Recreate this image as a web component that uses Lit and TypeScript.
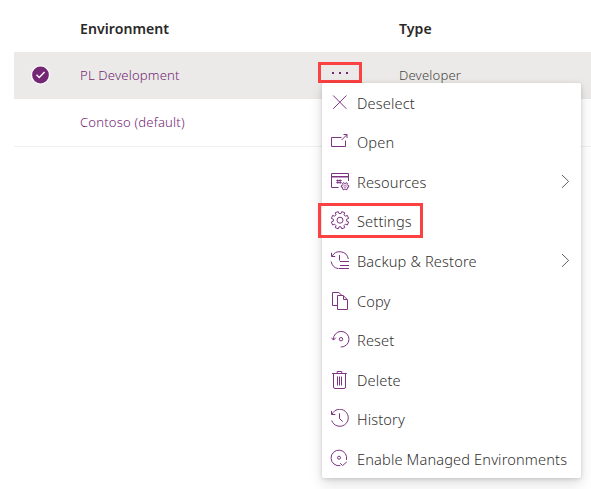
import { LitElement, html, css, svg } from "lit";
import { customElement } from "lit/decorators.js";

const gearPath = (cx: number, cy: number, ro: number, ri: number, teeth: number): string => {
  const pts: string[] = [];
  const step = (Math.PI * 2) / teeth;
  for (let i = 0; i < teeth; i++) {
    const a = i * step - Math.PI / 2 + step / 2;
    for (const [f, r] of [[-0.31, ri], [-0.24, ro], [0.24, ro], [0.31, ri]]) {
      const t = a + f * step;
      pts.push(`${(cx + r * Math.cos(t)).toFixed(2)} ${(cy + r * Math.sin(t)).toFixed(2)}`);
    }
  }
  return `M${pts.join("L")}Z`;
};

const icons = {
  deselect: svg`<path d="M3.2 2.5L16.4 15.8M16.4 2.5L3.2 15.8"/>`,
  open: svg`<path d="M11.5 5.5H1.5V14.5H15.5V8.5M11.6 8L17 2.6M13.5 2.5H17V6"/>`,
  resources: svg`<path d="M8.5 15.5H1.5V1.5H18.5V9M1.5 4.5H18.5M1.5 5H18.5M7.8 7.5V11.7M10.2 7.5V11.7M6.3 8.5H11.7M6.3 10.6H11.7"/><path d="${gearPath(15, 14.3, 3.8, 2.8, 6)}"/><circle cx="15" cy="14.3" r="1.2" stroke-width=".6"/>`,
  settings: svg`<path stroke-linejoin="round" d="${gearPath(10, 9.2, 8.8, 6.7, 8)}"/><circle cx="10" cy="9.2" r="3"/>`,
  backup: svg`<path d="M2 5.4A8.7 8.7 0 0 1 18.3 8M1.2 10.5A8.7 8.7 0 0 0 8 17.6M1.5 1.8V5.5H5.2M9.5 4V9.5M10 10.5H19M10 14.5H19M8.5 17.5H19"/>`,
  copy: svg`<path d="M7 14.5H2.5V1.5H8.8L12 4.5M7.5 4.5H13.2L17.5 8.8V18.5H7.5ZM13.5 4.8V8.5H17.3"/>`,
  reset: svg`<path d="M3.4 9.8A7.8 7.8 0 1 1 10.8 17M1.4 7.7L3.5 10.1L5.8 7.7"/><circle cx="11" cy="9.2" r="1.7"/>`,
  trash: svg`<path d="M2 3.5H16.8M7.2 3.3V1.5H11.8V3.3M3.5 3.5V17Q3.5 18.5 5 18.5H14Q15.5 18.5 15.5 17V3.5M7.5 6.5V15.5M9.5 6.5V15.5M11.5 6.5V15.5"/>`,
  history: svg`<path d="M2 5.3A8.5 8.5 0 1 1 1.7 11.5M1.5 1.8V5.5H5.3M9.5 4.3V9.6L12.8 12.6"/>`,
  managed: svg`<path d="M10.4 16.6A7.8 7.8 0 1 1 16.4 11M10.2 14.2L12.6 16.6L16.8 12.8"/><circle cx="9" cy="8.7" r="1.5"/>`,
};

interface Item {
  label: string;
  icon: keyof typeof icons;
  submenu?: boolean;
  marked?: boolean;
}

const items: Item[] = [
  { label: "Deselect", icon: "deselect" },
  { label: "Open", icon: "open" },
  { label: "Resources", icon: "resources", submenu: true },
  { label: "Settings", icon: "settings", marked: true },
  { label: "Backup & Restore", icon: "backup", submenu: true },
  { label: "Copy", icon: "copy" },
  { label: "Reset", icon: "reset" },
  { label: "Delete", icon: "trash" },
  { label: "History", icon: "history" },
  { label: "Enable Managed Environments", icon: "managed" },
];

@customElement("context-menu")
class ContextMenu extends LitElement {
  static styles = css`
    :host {
      display: block;
      box-sizing: border-box;
      width: 259px;
      background: #fff;
      border-radius: 2px;
      box-shadow: 0 6px 14px rgba(0, 0, 0, 0.13), 0 1px 4px rgba(0, 0, 0, 0.15);
      color: #323130;
      font-size: 14.6px;
      font-weight: 360;
      letter-spacing: 0.14px;
    }
    .item {
      position: relative;
      display: flex;
      align-items: center;
      height: 39.55px;
      padding: 0 11px 0 8px;
      box-sizing: border-box;
    }
    .icon {
      width: 20px;
      height: 20px;
      flex: none;
      fill: none;
      stroke: #7e3482;
      stroke-width: 1;
    }
    .label {
      flex: 1;
      margin-left: 7px;
      line-height: 20px;
      white-space: nowrap;
    }
    .chevron {
      width: 10px;
      height: 16px;
      fill: none;
      stroke: #605e5c;
      stroke-width: 1;
    }
    .mark {
      position: absolute;
      left: -4px;
      top: 1.4px;
      width: 105px;
      height: 35px;
      box-sizing: border-box;
      border: 3px solid #fb4141;
    }
  `;
  render() {
    return html`${items.map(
      (i) => html`<div class="item">
        <svg class="icon" viewBox="0 0 20 20">${icons[i.icon]}</svg>
        <span class="label">${i.label}</span>
        ${i.submenu
          ? html`<svg class="chevron" viewBox="0 0 10 16"><path d="M2 1L8.6 7.4L2 13.8" /></svg>`
          : null}
        ${i.marked ? html`<div class="mark"></div>` : null}
      </div>`
    )}`;
  }
}

@customElement("app-root")
class AppRoot extends LitElement {
  static styles = css`
    :host {
      display: block;
      position: relative;
      height: 489px;
      overflow: hidden;
      background: #fff;
      font-family: "Noto Sans", "Open Sans", sans-serif;
      font-weight: 400;
      color: #323130;
    }
    .table {
      padding-left: 14px;
    }
    .row {
      display: grid;
      grid-template-columns: 66px 238px 81px 1fr;
      align-items: center;
      height: 47px;
      box-sizing: border-box;
      font-size: 13.1px;
      font-weight: 360;
      letter-spacing: 0.17px;
      line-height: 18px;
    }
    .head {
      height: 52px;
      padding-top: 6px;
      font-size: 14.1px;
      font-weight: 560;
      letter-spacing: 0.05px;
      color: #292827;
    }
    .selected {
      background: #ebeae8;
    }
    .plain {
      height: 48px;
      border-bottom: 1px solid #f1f0ef;
    }
    .name,
    .type {
      padding-bottom: 2px;
    }
    .name {
      color: #742774;
    }
    .type {
      color: #484644;
    }
    .check {
      width: 20px;
      height: 20px;
      margin: -1px 0 0 16px;
      display: block;
    }
    .more {
      width: 44px;
      height: 21px;
      align-self: start;
      margin-top: 10px;
      box-sizing: border-box;
      border: 3px solid #fb4141;
      display: flex;
      align-items: center;
      justify-content: center;
      gap: 5px;
    }
    .dot {
      width: 2px;
      height: 2px;
      background: #742774;
    }
    context-menu {
      position: absolute;
      left: 322px;
      top: 83px;
    }
  `;
  render() {
    return html`
      <div class="table">
        <div class="row head"><span></span><span>Environment</span><span></span><span>Type</span></div>
        <div class="row selected">
          <svg class="check" viewBox="0 0 20 20">
            <circle cx="10.5" cy="10" r="9.6" fill="#fff" />
            <circle cx="10.5" cy="10" r="8.4" fill="#742774" />
            <path d="M6.5 9.8L9.2 12.4L14.6 7" fill="none" stroke="#fff" stroke-width="1.4" />
          </svg>
          <span class="name">PL Development</span>
          <div class="more"><i class="dot"></i><i class="dot"></i><i class="dot"></i></div>
          <span class="type">Developer</span>
        </div>
        <div class="row plain"><span></span><span class="name">Contoso (default)</span></div>
      </div>
      <context-menu></context-menu>
    `;
  }
}
